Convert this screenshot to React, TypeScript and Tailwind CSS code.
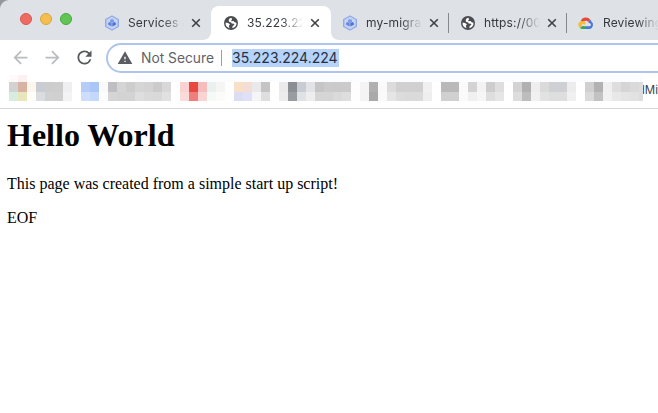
import type { ReactNode } from "react";
import { MdArrowBack, MdArrowForward, MdRefresh, MdWarning } from "react-icons/md";

function Close() {
  return (
    <svg viewBox="0 0 10 10" className="h-[10px] w-[10px] shrink-0">
      <path d="M1.2 1.2 8.8 8.8M8.8 1.2 1.2 8.8" stroke="#3f4246" strokeWidth="1.6" fill="none" />
    </svg>
  );
}

function Globe() {
  return (
    <svg viewBox="0 0 14 14" className="h-[14px] w-[14px] shrink-0">
      <circle cx="7" cy="7" r="7" fill="#4a4c51" />
      <path
        d="M7.3 1.7C5.6 2.1 4.7 3.1 4.7 4.4c0 1.4 1 1.7 2.3 1.8l.7 1.2 2.1.4c.9.4.6 1.2-.2 1.5l-1 .9-.4 1.9c2.9-.5 4.5-2.6 4.3-5.4l-1.9-.4-1-1.2-2 .1-.4-1 1-.9Z"
        fill="#fff"
      />
      <path d="M1.5 6.8c1.1-.1 3.3.2 4.1 1.2.5.8-.1 1.3-.7 1.6l.1 1.5.9 1.2C3.1 11.8 1.3 9.7 1.5 6.8Z" fill="#fff" />
    </svg>
  );
}

function Hexagon() {
  return (
    <svg viewBox="0 0 16 16" className="-mx-px h-4 w-4 shrink-0">
      <path d="M8 1 14.3 4.5v7L8 15 1.7 11.5v-7Z" fill="#c6d3f2" stroke="#91abe8" strokeWidth="1.4" strokeLinejoin="round" />
      <path d="m8 3.9 2 1.1v2.1L8 8.2 6 7.1V5Z" fill="#7f9ce6" />
      <path d="m5.7 7.1 2 1.2v3.2L4.1 9.8V8.1Z" fill="#6486de" />
      <path d="m10.3 7.1-2 1.2v3.2l3.6-1.7V8.1Z" fill="#4d73d8" />
    </svg>
  );
}

function Cloud() {
  return (
    <svg viewBox="0 0 16 14" className="h-[14px] w-4 shrink-0">
      <path d="M2.6 5.6A5.5 5.5 0 0 1 12.4 3.8L10.3 5.9A3.1 3.1 0 0 0 5.9 5.6Z" fill="#e64a3d" />
      <path d="M12.4 3.8c.5.6.8 1.2 1 1.8A4.2 4.2 0 0 1 11.8 13H8v-2.8h3.7c1.8-.3 1.9-2.8-.8-3.1l-.6-1.2Z" fill="#4778dc" />
      <path d="M8 10.2V13H4.4c-1 0-1.8-.3-2.5-.9l2.2-2Z" fill="#38a557" />
      <path d="M5.4 5.3A4 4 0 0 1 8 7L6.1 8.9c-.8-1.6-2.8-.7-2 1.2l-2.2 2C-.7 9.9.2 6.1 2.6 5.6Z" fill="#f3bd35" />
    </svg>
  );
}

function Tab({ icon, title, className, close = true }: { icon: ReactNode; title: string; className: string; close?: boolean }) {
  return (
    <div className={`relative flex h-[34px] shrink-0 items-center ${className}`}>
      {icon}
      <span className="ml-[9px] w-[56px] shrink-0 overflow-hidden text-[12px] leading-4 tracking-[0.15px] whitespace-nowrap text-[#36393e] [mask-image:linear-gradient(to_right,#000_62%,transparent)]">
        {title}
      </span>
      {close && (
        <span className="ml-[7px] flex">
          <Close />
        </span>
      )}
    </div>
  );
}

function Flare({ flip = false }: { flip?: boolean }) {
  return (
    <svg
      viewBox="0 0 8 8"
      className={flip ? "absolute bottom-0 -right-2 h-2 w-2 -scale-x-100" : "absolute bottom-0 -left-2 h-2 w-2"}
    >
      <path d="M8 0v8H0c4.4 0 8-3.6 8-8Z" fill="#fff" />
    </svg>
  );
}

// Each bookmark cell: [upper shade, lower shade], nine pixels wide.
const cells: [string, string][] = [
  ["#d3d2d0", "#d6ede0"], ["#d8b3a3", "#e8e6bb"], ["#fdf6ec", "#fffdf8"], ["#c9ccd2", "#dadcdf"],
  ["#cdcdce", "#d0d1d2"], ["#cecece", "#d0d0d0"], ["#efeff1", "#f3f3f4"],
  ["#ffffff", "#ffffff"], ["#b5ccf7", "#cdddfa"], ["#a9c6f6", "#c4d8fa"], ["#fbfaf8", "#fcfcfc"],
  ["#bebfc3", "#d5d5d5"], ["#d5d5d5", "#d3d3d3"], ["#cdcdcd", "#d3d3d3"], ["#d5d5d5", "#dedede"],
  ["#d3d3d3", "#dadada"], ["#cbcbcb", "#d9d9d9"], ["#d8d8d8", "#e1e1e1"], ["#ffffff", "#ffffff"],
  ["#f9d3d1", "#fbdbda"], ["#e84840", "#ee7f7c"], ["#f7bdbd", "#fad3d3"], ["#e9f0ee", "#f5f9f7"],
  ["#f5f6f4", "#fbfbfa"], ["#ffffff", "#fefefe"], ["#f8dfc8", "#dcdcf3"], ["#f3ddd5", "#e0e1f6"],
  ["#e9e9eb", "#f5f5f8"], ["#c4c4c4", "#dedede"], ["#ffffff", "#ffffff"],
  ["#eaeaea", "#ececec"], ["#8b8e93", "#999ca1"], ["#c9cdd3", "#e0e2e5"], ["#e2e3e6", "#eeeeee"],
  ["#c5c5c5", "#d5d5d5"], ["#cbcbcb", "#d5d5d5"], ["#cacaca", "#dadada"], ["#cbcbcb", "#dedede"],
  ["#fdfdfd", "#fefefe"], ["#f4f4f4", "#f4f4f4"], ["#b0b0b0", "#aaaaaa"],
  ["#fafafa", "#fafafa"], ["#dcdcdc", "#e5e5e5"], ["#d0d0d0", "#dcdcdc"], ["#d0d0d0", "#dadada"],
  ["#d0d0d0", "#dadada"], ["#f0f0f0", "#eeeeee"], ["#ffffff", "#ffffff"],
  ["#b9b9b9", "#d0d0d0"], ["#b9b9b9", "#d0d0d0"], ["#fafafa", "#fafafa"], ["#d3d3d3", "#f0f0f0"],
  ["#f3f3f3", "#f6f6f6"], ["#cdcdcd", "#dedede"], ["#dedede", "#e6e6e6"], ["#ffffff", "#ffffff"],
  ["#d3d3d3", "#dddddd"], ["#b0b0b0", "#bdbdbd"], ["#eeeeee", "#f1f1f1"], ["#dadada", "#e2e2e2"],
  ["#cfd0d3", "#dedede"], ["#cfd0d3", "#dedede"], ["#ececec", "#f0f0f0"], ["#ffffff", "#ffffff"],
  ["#d0d0d0", "#dadada"], ["#b2b2b2", "#c2c2c2"], ["#f0f0f0", "#f1f1f1"], ["#dedede", "#e8e8e8"],
  ["#d5d5d5", "#e4e4e4"], ["#dadada", "#e2e2e2"],
];

export default function App() {
  return (
    <div className="flex h-[413px] w-[658px] flex-col overflow-hidden bg-white font-['Inter',sans-serif]">
      <div className="bg-[#9499a0]">
        <header className="flex h-10 items-end rounded-tl-[9px] bg-[#dee1e6]">
          <div className="mb-[15px] ml-5 flex w-[72px] shrink-0 gap-2">
            <span className="h-3 w-3 rounded-full border border-[#d95850] bg-[#ed6b60]" />
            <span className="h-3 w-3 rounded-full border border-[#d9a540] bg-[#f5bf4f]" />
            <span className="h-3 w-3 rounded-full border border-[#48a73c] bg-[#61c554]" />
          </div>
          <Tab icon={<Hexagon />} title="Services &" className="w-[119px] pl-[13px]" />
          <div className="relative shrink-0 rounded-t-lg bg-white">
            <Flare />
            <Tab icon={<Globe />} title="35.223.22" className="w-[120px] pl-[13px]" />
            <Flare flip />
          </div>
          <Tab icon={<Hexagon />} title="my-migra" className="w-[117px] pl-3" />
          <span className="mb-[7px] h-5 w-px shrink-0 bg-[#85888d]" />
          <Tab icon={<Globe />} title="https://00" className="w-[117px] pl-3" />
          <span className="mb-[7px] h-5 w-px shrink-0 bg-[#85888d]" />
          <Tab icon={<Cloud />} title="Reviewing" className="w-[118px] pl-[11px]" close={false} />
        </header>
      </div>

      <nav className="flex h-[35px] shrink-0 items-center">
        <MdArrowBack className="ml-[10px] h-[21px] w-[21px] shrink-0 text-[#babcbe]" />
        <MdArrowForward className="ml-[11px] h-[21px] w-[21px] shrink-0 text-[#babcbe]" />
        <MdRefresh className="ml-[11px] h-[21px] w-[21px] shrink-0 text-[#55585c]" />
        <div className="ml-[11px] flex h-[30px] w-[580px] shrink-0 items-center rounded-full border-2 border-[#b0c5ec] bg-white">
          <MdWarning className="ml-[9px] h-4 w-4 shrink-0 text-[#5a5d61]" />
          <span className="ml-[8px] w-[74px] text-[13.8px] leading-5 whitespace-nowrap text-[#5f6368]">Not Secure</span>
          <span className="ml-[6px] h-4 w-px bg-[#9a9da1]" />
          <span className="ml-[10px] h-[18px] w-[107px] bg-[#b5d3fb] text-[14px] leading-[18px] whitespace-nowrap text-[#27303c]">
            35.223.224.224
          </span>
        </div>
      </nav>

      <div className="flex h-[34px] shrink-0 flex-col border-b border-[#d6d7da]">
        <div className="flex h-[7px] shrink-0">
          <div className="ml-[9px] w-[9px] bg-[#fff9f9]" />
          <div className="w-[9px] bg-[#fdf0f0]" />
          <div className="ml-[108px] w-[508px] bg-[#fbfcff]" />
        </div>
        <div className="flex h-[19px] shrink-0 items-stretch pl-[9px]">
          {cells.map(([upper, lower], i) => (
            <div key={i} className="flex w-[9px] shrink-0 flex-col">
              <div className="h-[10px]" style={{ backgroundColor: upper }} />
              <div className="h-[9px]" style={{ backgroundColor: lower }} />
            </div>
          ))}
          <div className="w-[4px] shrink-0 bg-[#dddddd]" />
          <div className="flex h-4 w-[15px] shrink-0 justify-end overflow-hidden text-[11.5px] leading-4 text-[#3f4247]">dMi</div>
        </div>
      </div>

      <main className="pl-[7px] font-['Liberation_Serif',serif] text-black">
        <h1 className="mt-[8px] text-[32px] leading-[36px] font-bold">Hello World</h1>
        <p className="mt-[22px] text-[16px] leading-[18px]">This page was created from a simple start up script!</p>
        <p className="mt-4 text-[16px] leading-[18px]">EOF</p>
      </main>
    </div>
  );
}
